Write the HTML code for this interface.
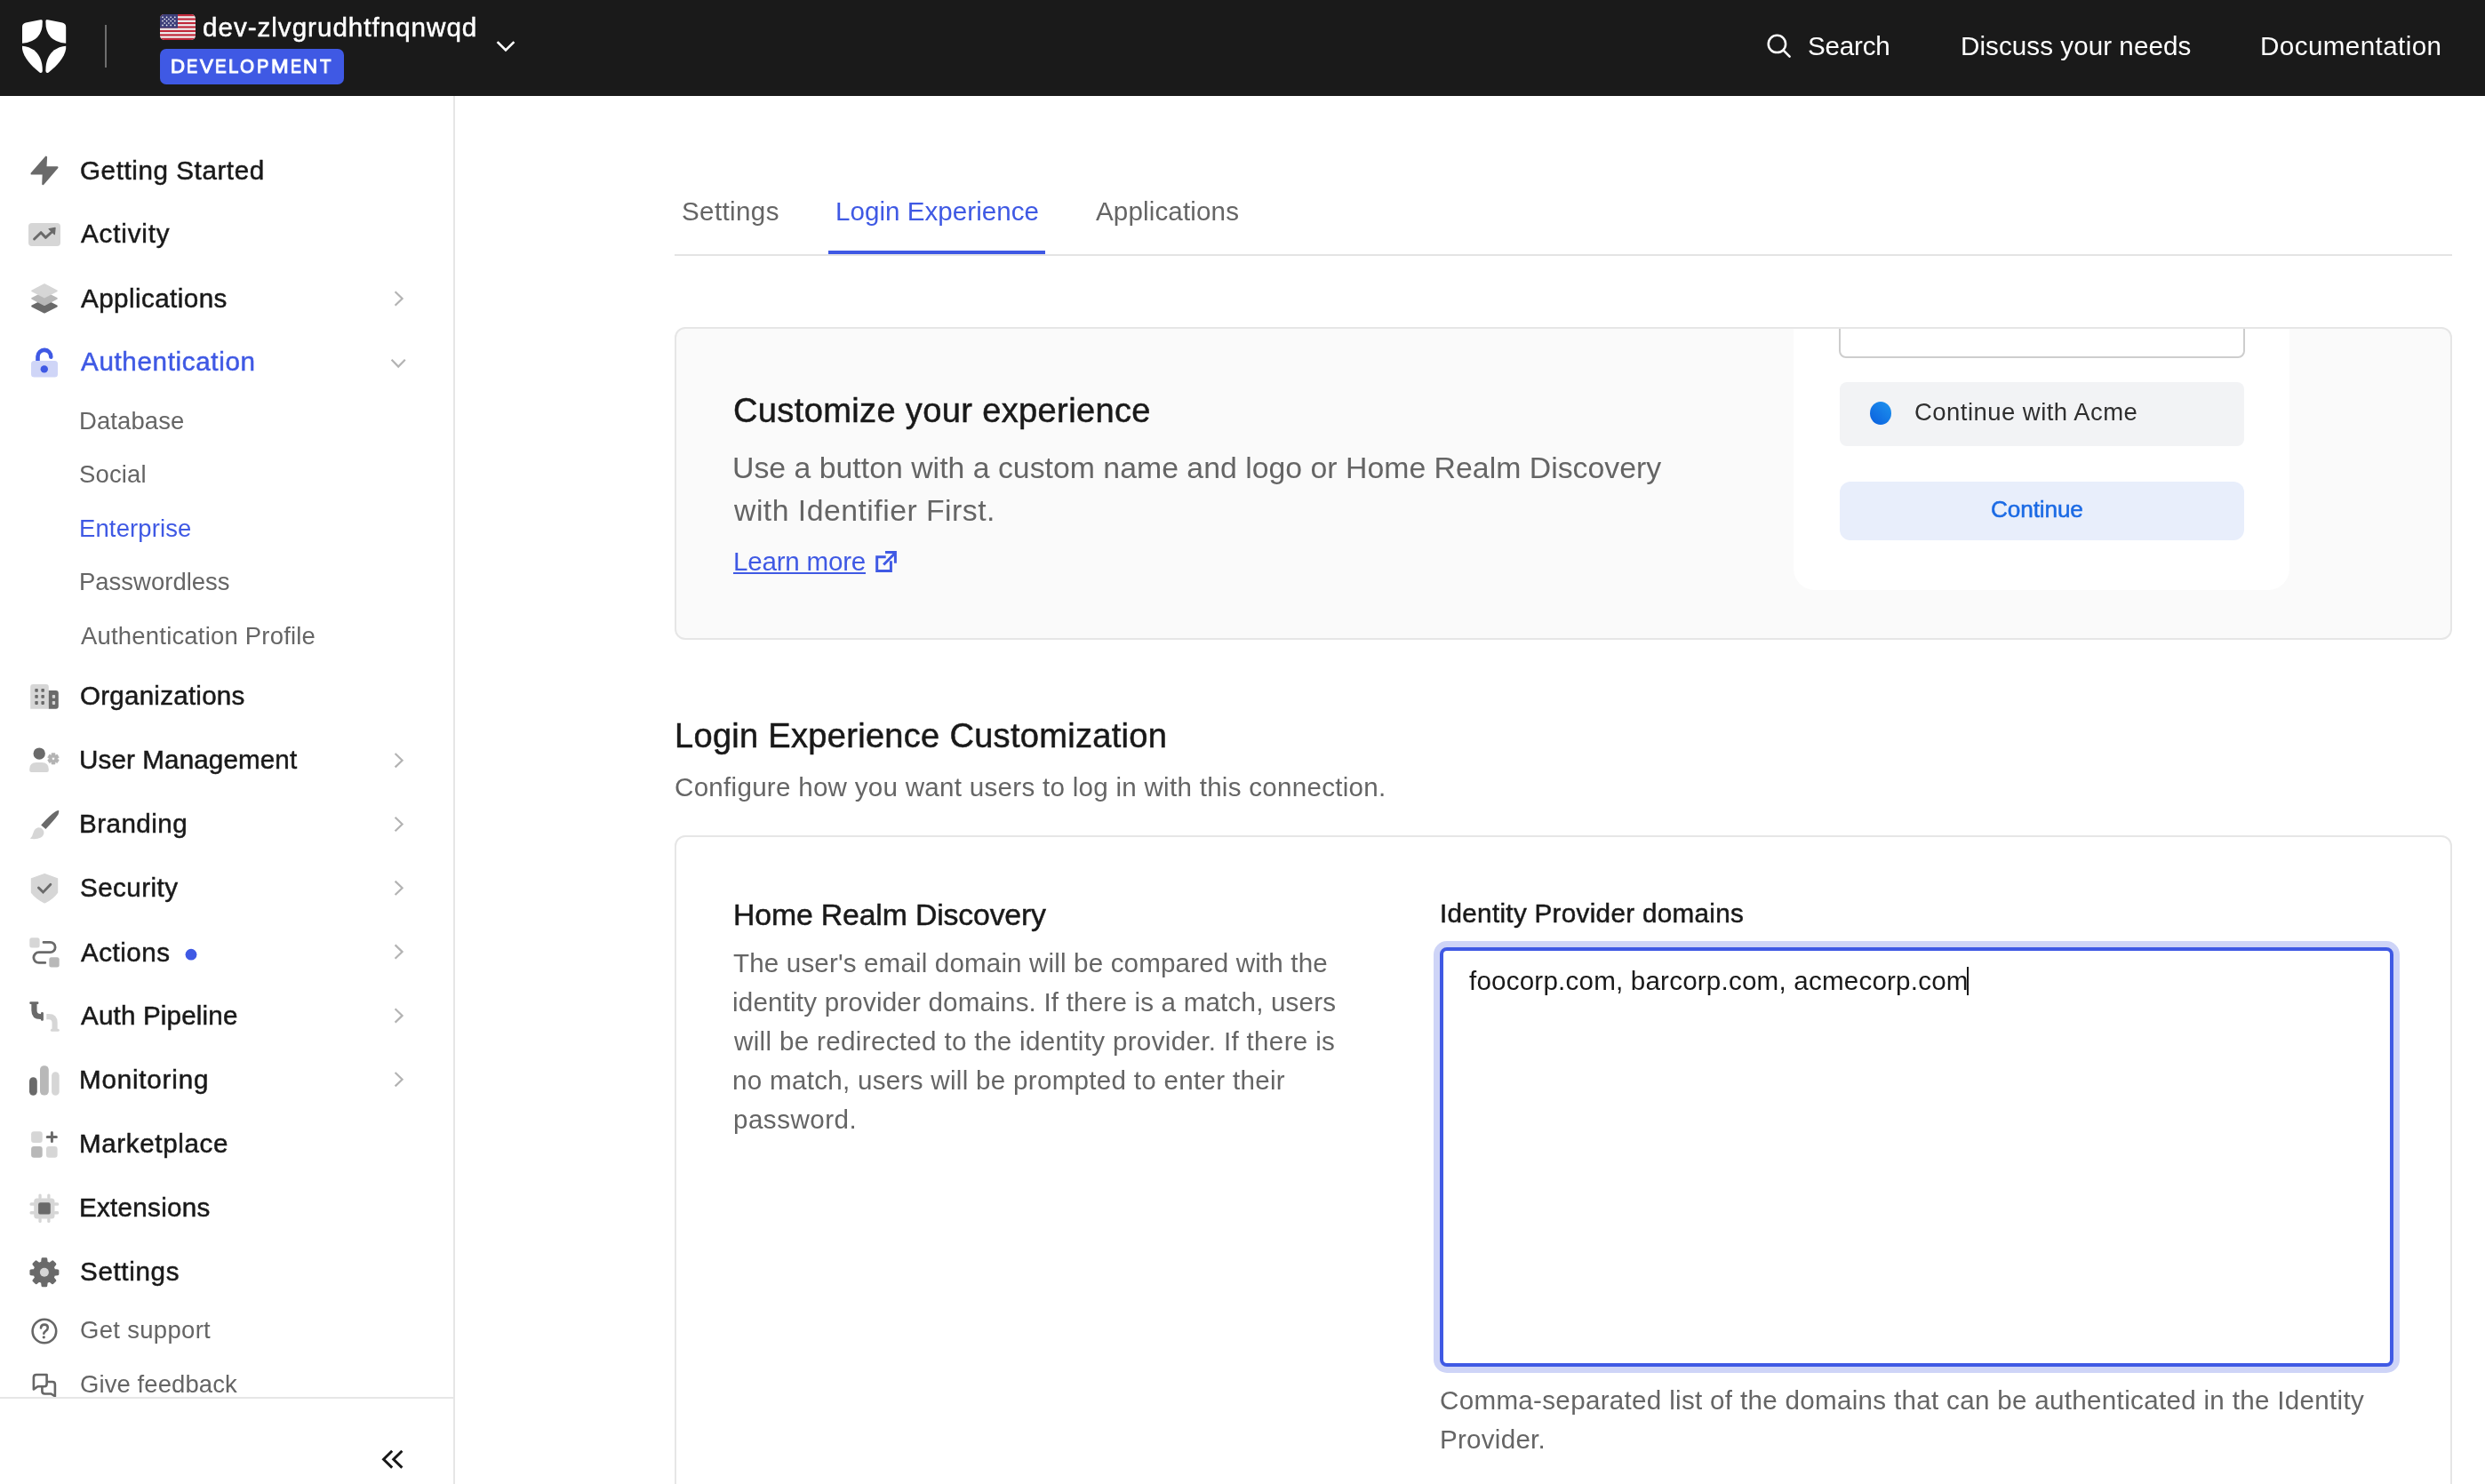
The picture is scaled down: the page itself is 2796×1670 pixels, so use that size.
<!DOCTYPE html>
<html><head><meta charset="utf-8"><title>Auth0 Dashboard</title>
<style>
html,body{margin:0;padding:0;width:2796px;height:1670px;overflow:hidden;background:#ffffff;font-family:"Liberation Sans",sans-serif}
.t{position:absolute;line-height:0;white-space:nowrap;font-family:"Liberation Sans",sans-serif;will-change:transform}
.b{position:absolute;box-sizing:border-box}
svg{position:absolute;left:0;top:0}
@media (max-width:2000px){html{zoom:0.5}}
</style></head><body>
<!-- HEADER -->
<div class="b" style="left:0;top:0;width:2796px;height:108px;background:#1a1a1a"></div>
<div class="b" style="left:118px;top:28px;width:2px;height:48px;background:#6e6e6e"></div>
<div class="b" style="left:180px;top:55px;width:207px;height:40px;background:#3f59e4;border-radius:7px"></div>

<!-- SIDEBAR -->
<div class="b" style="left:510px;top:108px;width:2px;height:1562px;background:#e6e6e6"></div>
<div class="b" style="left:0;top:1572px;width:510px;height:2px;background:#e6e6e6"></div>

<!-- TABS -->
<div class="b" style="left:759px;top:286px;width:2000px;height:2px;background:#e4e4e4"></div>
<div class="b" style="left:932px;top:282px;width:244px;height:4px;background:#3f59e4"></div>

<!-- CARD 1 -->
<div class="b" style="left:759px;top:368px;width:2000px;height:352px;border:2px solid #e6e6e6;border-radius:12px;background:#fafafa;overflow:hidden">
  <div class="b" style="left:1257px;top:-40px;width:558px;height:334px;background:#ffffff;border-radius:0 0 24px 24px"></div>
  <div class="b" style="left:1308px;top:-60px;width:457px;height:93px;background:#ffffff;border:2px solid #cdcdcd;border-radius:8px"></div>
  <div class="b" style="left:1309px;top:60px;width:455px;height:72px;background:#f2f3f5;border-radius:8px"></div>
  <div class="b" style="left:1343px;top:82px;width:24px;height:26px;border-radius:50%;background:linear-gradient(225deg,#1e94ee 0%,#0a5ede 100%)"></div>
  <div class="b" style="left:1309px;top:172px;width:455px;height:66px;background:#e8eefb;border-radius:12px"></div>
</div>

<!-- CARD 2 -->
<div class="b" style="left:759px;top:940px;width:2000px;height:900px;border:2px solid #e6e6e6;border-radius:12px;background:#ffffff"></div>
<div class="b" style="left:1620px;top:1066px;width:1073px;height:472px;border:4px solid #3f59e4;border-radius:8px;background:#ffffff;box-shadow:0 0 0 7px #ced4f7"></div>
<div class="b" style="left:2213px;top:1088px;width:2px;height:32px;background:#191919"></div>

<div class="t" style="left:228.00px;top:30.74px;font-size:29.6px;letter-spacing:0.989px;color:#ffffff;-webkit-text-stroke:0.5px #ffffff;">dev-zlvgrudhtfnqnwqd</div>
<div class="t" style="left:192.22px;top:75.00px;font-size:22.2px;letter-spacing:0.000px;color:#ffffff;-webkit-text-stroke:1px #ffffff;transform:scaleX(0.979);transform-origin:0 0;">D</div>
<div class="t" style="left:210.17px;top:75.00px;font-size:22.2px;letter-spacing:0.000px;color:#ffffff;-webkit-text-stroke:1px #ffffff;transform:scaleX(0.831);transform-origin:0 0;">E</div>
<div class="t" style="left:224.80px;top:75.00px;font-size:22.2px;letter-spacing:0.000px;color:#ffffff;-webkit-text-stroke:1px #ffffff;transform:scaleX(1.007);transform-origin:0 0;">V</div>
<div class="t" style="left:242.15px;top:75.00px;font-size:22.2px;letter-spacing:0.000px;color:#ffffff;-webkit-text-stroke:1px #ffffff;transform:scaleX(0.846);transform-origin:0 0;">E</div>
<div class="t" style="left:257.08px;top:75.00px;font-size:22.2px;letter-spacing:0.000px;color:#ffffff;-webkit-text-stroke:1px #ffffff;transform:scaleX(0.918);transform-origin:0 0;">L</div>
<div class="t" style="left:270.27px;top:75.00px;font-size:22.2px;letter-spacing:0.000px;color:#ffffff;-webkit-text-stroke:1px #ffffff;transform:scaleX(0.925);transform-origin:0 0;">O</div>
<div class="t" style="left:289.10px;top:75.00px;font-size:22.2px;letter-spacing:0.000px;color:#ffffff;-webkit-text-stroke:1px #ffffff;transform:scaleX(0.900);transform-origin:0 0;">P</div>
<div class="t" style="left:304.94px;top:75.00px;font-size:22.2px;letter-spacing:0.000px;color:#ffffff;-webkit-text-stroke:1px #ffffff;transform:scaleX(1.062);transform-origin:0 0;">M</div>
<div class="t" style="left:326.58px;top:75.00px;font-size:22.2px;letter-spacing:0.000px;color:#ffffff;-webkit-text-stroke:1px #ffffff;transform:scaleX(0.815);transform-origin:0 0;">E</div>
<div class="t" style="left:341.02px;top:75.00px;font-size:22.2px;letter-spacing:0.000px;color:#ffffff;-webkit-text-stroke:1px #ffffff;transform:scaleX(0.979);transform-origin:0 0;">N</div>
<div class="t" style="left:359.50px;top:75.00px;font-size:22.2px;letter-spacing:0.000px;color:#ffffff;-webkit-text-stroke:1px #ffffff;transform:scaleX(0.914);transform-origin:0 0;">T</div>
<div class="t" style="left:2033.90px;top:51.84px;font-size:29.6px;letter-spacing:-0.220px;color:#ffffff;">Search</div>
<div class="t" style="left:2205.60px;top:52.44px;font-size:29.6px;letter-spacing:0.059px;color:#ffffff;">Discuss your needs</div>
<div class="t" style="left:2542.80px;top:52.44px;font-size:29.6px;letter-spacing:0.417px;color:#ffffff;">Documentation</div>
<div class="t" style="left:90.20px;top:192.04px;font-size:29.6px;letter-spacing:0.579px;color:#191919;-webkit-text-stroke:0.5px #191919;">Getting Started</div>
<div class="t" style="left:91.00px;top:263.44px;font-size:29.6px;letter-spacing:0.829px;color:#191919;-webkit-text-stroke:0.5px #191919;">Activity</div>
<div class="t" style="left:91.00px;top:335.64px;font-size:29.6px;letter-spacing:0.436px;color:#191919;-webkit-text-stroke:0.5px #191919;">Applications</div>
<div class="t" style="left:91.20px;top:407.44px;font-size:29.6px;letter-spacing:0.646px;color:#3f59e4;-webkit-text-stroke:0.5px #3f59e4;">Authentication</div>
<div class="t" style="left:89.30px;top:473.67px;font-size:27.48px;letter-spacing:0.100px;color:#656565;">Database</div>
<div class="t" style="left:89.30px;top:534.27px;font-size:27.48px;letter-spacing:0.140px;color:#656565;">Social</div>
<div class="t" style="left:89.30px;top:595.27px;font-size:27.48px;letter-spacing:0.133px;color:#3f59e4;">Enterprise</div>
<div class="t" style="left:89.30px;top:655.47px;font-size:27.48px;letter-spacing:0.009px;color:#656565;">Passwordless</div>
<div class="t" style="left:91.30px;top:716.47px;font-size:27.48px;letter-spacing:0.205px;color:#656565;">Authentication Profile</div>
<div class="t" style="left:90.00px;top:783.44px;font-size:29.6px;letter-spacing:0.225px;color:#191919;-webkit-text-stroke:0.5px #191919;">Organizations</div>
<div class="t" style="left:89.00px;top:855.24px;font-size:29.6px;letter-spacing:0.121px;color:#191919;-webkit-text-stroke:0.5px #191919;">User Management</div>
<div class="t" style="left:89.00px;top:927.14px;font-size:29.6px;letter-spacing:0.457px;color:#191919;-webkit-text-stroke:0.5px #191919;">Branding</div>
<div class="t" style="left:90.00px;top:998.94px;font-size:29.6px;letter-spacing:0.443px;color:#191919;-webkit-text-stroke:0.5px #191919;">Security</div>
<div class="t" style="left:91.00px;top:1071.54px;font-size:29.6px;letter-spacing:0.500px;color:#191919;-webkit-text-stroke:0.5px #191919;">Actions</div>
<div class="t" style="left:91.00px;top:1143.44px;font-size:29.6px;letter-spacing:0.167px;color:#191919;-webkit-text-stroke:0.5px #191919;">Auth Pipeline</div>
<div class="t" style="left:89.00px;top:1215.34px;font-size:29.6px;letter-spacing:0.800px;color:#191919;-webkit-text-stroke:0.5px #191919;">Monitoring</div>
<div class="t" style="left:89.00px;top:1287.14px;font-size:29.6px;letter-spacing:0.620px;color:#191919;-webkit-text-stroke:0.5px #191919;">Marketplace</div>
<div class="t" style="left:89.00px;top:1359.24px;font-size:29.6px;letter-spacing:0.289px;color:#191919;-webkit-text-stroke:0.5px #191919;">Extensions</div>
<div class="t" style="left:90.00px;top:1431.24px;font-size:29.6px;letter-spacing:0.643px;color:#191919;-webkit-text-stroke:0.5px #191919;">Settings</div>
<div class="t" style="left:90.30px;top:1496.97px;font-size:27.48px;letter-spacing:0.320px;color:#656565;">Get support</div>
<div class="t" style="left:90.30px;top:1557.87px;font-size:27.48px;letter-spacing:0.100px;color:#656565;">Give feedback</div>
<div class="t" style="left:766.50px;top:237.84px;font-size:29.6px;letter-spacing:0.357px;color:#656565;">Settings</div>
<div class="t" style="left:939.50px;top:237.84px;font-size:29.6px;letter-spacing:0.020px;color:#3f59e4;">Login Experience</div>
<div class="t" style="left:1232.80px;top:237.84px;font-size:29.6px;letter-spacing:0.127px;color:#656565;">Applications</div>
<div class="t" style="left:824.90px;top:461.91px;font-size:38.05px;letter-spacing:0.354px;color:#191919;-webkit-text-stroke:0.5px #191919;">Customize your experience</div>
<div class="t" style="left:824.40px;top:525.97px;font-size:33.82px;letter-spacing:0.005px;color:#656565;">Use a button with a custom name and logo or Home Realm Discovery</div>
<div class="t" style="left:826.30px;top:573.77px;font-size:33.82px;letter-spacing:0.462px;color:#656565;">with Identifier First.</div>
<div class="t" style="left:825.30px;top:631.54px;font-size:29.6px;letter-spacing:-0.233px;color:#3f59e4;text-decoration:underline;text-decoration-thickness:2px;text-underline-offset:2px;">Learn more</div>
<div class="t" style="left:2154.40px;top:464.47px;font-size:27.48px;letter-spacing:0.476px;color:#2f2f2f;">Continue with Acme</div>
<div class="t" style="left:2240.30px;top:573.31px;font-size:26.21px;letter-spacing:-0.143px;color:#1b6ae4;-webkit-text-stroke:0.5px #1b6ae4;">Continue</div>
<div class="t" style="left:759.00px;top:827.51px;font-size:38.05px;letter-spacing:0.283px;color:#191919;-webkit-text-stroke:0.5px #191919;">Login Experience Customization</div>
<div class="t" style="left:758.60px;top:885.84px;font-size:29.6px;letter-spacing:0.264px;color:#656565;">Configure how you want users to log in with this connection.</div>
<div class="t" style="left:824.70px;top:1028.57px;font-size:33.82px;letter-spacing:-0.163px;color:#191919;-webkit-text-stroke:0.5px #191919;">Home Realm Discovery</div>
<div class="t" style="left:824.70px;top:1084.14px;font-size:29.6px;letter-spacing:0.142px;color:#656565;">The user's email domain will be compared with the</div>
<div class="t" style="left:823.70px;top:1128.14px;font-size:29.6px;letter-spacing:0.185px;color:#656565;">identity provider domains. If there is a match, users</div>
<div class="t" style="left:825.70px;top:1172.04px;font-size:29.6px;letter-spacing:0.325px;color:#656565;">will be redirected to the identity provider. If there is</div>
<div class="t" style="left:823.70px;top:1216.04px;font-size:29.6px;letter-spacing:0.283px;color:#656565;">no match, users will be prompted to enter their</div>
<div class="t" style="left:824.50px;top:1259.94px;font-size:29.6px;letter-spacing:0.475px;color:#656565;">password.</div>
<div class="t" style="left:1620.20px;top:1028.04px;font-size:29.6px;letter-spacing:0.325px;color:#191919;-webkit-text-stroke:0.5px #191919;">Identity Provider domains</div>
<div class="t" style="left:1653.00px;top:1104.24px;font-size:29.6px;letter-spacing:0.195px;color:#191919;">foocorp.com, barcorp.com, acmecorp.com</div>
<div class="t" style="left:1619.70px;top:1576.24px;font-size:29.6px;letter-spacing:0.304px;color:#656565;">Comma-separated list of the domains that can be authenticated in the Identity</div>
<div class="t" style="left:1619.70px;top:1620.24px;font-size:29.6px;letter-spacing:0.250px;color:#656565;">Provider.</div>

<svg width="2796" height="1670" viewBox="0 0 2796 1670">
 <defs>
  <clipPath id="flagclip"><rect x="180" y="16" width="40" height="29" rx="4.8"/></clipPath>
  <clipPath id="fbclip"><rect x="0" y="1500" width="510" height="72"/></clipPath>
 </defs>
 <!-- logo -->
 <g transform="translate(25,22)" fill="#ffffff">
  <path d="M0,8.5 C0,5.6 1.4,4.3 4,3.6 L20.5,0.3 C22.2,0 22.8,0.6 22.8,2.2 Q23.2,24.6 0,26.8 Z"/>
  <path d="M0,29.8 C9,30.5 22.8,36 22.8,57.5 C22.8,60 21,60.6 19.5,59.5 C9,51 2,43 0,33 Z"/>
  <g transform="translate(49.2,0) scale(-1,1)">
   <path d="M0,8.5 C0,5.6 1.4,4.3 4,3.6 L20.5,0.3 C22.2,0 22.8,0.6 22.8,2.2 Q23.2,24.6 0,26.8 Z"/>
   <path d="M0,29.8 C9,30.5 22.8,36 22.8,57.5 C22.8,60 21,60.6 19.5,59.5 C9,51 2,43 0,33 Z"/>
  </g>
 </g>
 <!-- flag -->
 <g clip-path="url(#flagclip)">
  <rect x="180" y="16" width="40" height="29" fill="#eef0f0"/>
  <rect x="180" y="16" width="40" height="2.23" fill="#c0283a"/>
  <rect x="180" y="20.46" width="40" height="2.23" fill="#c0283a"/>
  <rect x="180" y="24.92" width="40" height="2.23" fill="#c0283a"/>
  <rect x="180" y="29.38" width="40" height="2.23" fill="#c0283a"/>
  <rect x="180" y="33.85" width="40" height="2.23" fill="#c0283a"/>
  <rect x="180" y="38.31" width="40" height="2.23" fill="#c0283a"/>
  <rect x="180" y="42.77" width="40" height="2.23" fill="#c0283a"/>
  <rect x="180" y="16" width="20" height="15.6" fill="#3d3f7a"/>
  <g fill="#f4f4f8"><circle cx="183" cy="19.3" r="0.85"/><circle cx="187.6" cy="19.3" r="0.85"/><circle cx="192.2" cy="19.3" r="0.85"/><circle cx="196.8" cy="19.3" r="0.85"/><circle cx="185.3" cy="21.5" r="0.85"/><circle cx="189.9" cy="21.5" r="0.85"/><circle cx="194.5" cy="21.5" r="0.85"/><circle cx="183" cy="23.6" r="0.85"/><circle cx="187.6" cy="23.6" r="0.85"/><circle cx="192.2" cy="23.6" r="0.85"/><circle cx="196.8" cy="23.6" r="0.85"/><circle cx="185.3" cy="26.0" r="0.85"/><circle cx="189.9" cy="26.0" r="0.85"/><circle cx="194.5" cy="26.0" r="0.85"/><circle cx="183" cy="28.4" r="0.85"/><circle cx="187.6" cy="28.4" r="0.85"/><circle cx="192.2" cy="28.4" r="0.85"/><circle cx="196.8" cy="28.4" r="0.85"/></g>
 </g>
 <!-- tenant chevron -->
 <polyline points="560.5,48 569,56.5 577.5,48" fill="none" stroke="#ffffff" stroke-width="2.6" stroke-linecap="square"/>
 <!-- search icon -->
 <circle cx="1999.4" cy="49.4" r="9.7" fill="none" stroke="#ffffff" stroke-width="2.5"/>
 <line x1="2006.6" y1="56.6" x2="2013.6" y2="63.6" stroke="#ffffff" stroke-width="2.6" stroke-linecap="round"/>

 <!-- sidebar icons -->
 <!-- getting started -->
 <path d="M51.9,176.8 L51.3,188.3 L64.3,188.5 L48.4,207.0 L48.9,195.4 L35.7,195.4 Z" fill="#6a6a6a" stroke="#6a6a6a" stroke-width="2.4" stroke-linejoin="round"/>
 <!-- activity -->
 <rect x="32" y="251" width="36" height="26" rx="4" fill="#d6d6d6"/>
 <polyline points="38.6,269 46.1,261.7 51.3,267.3 58.3,261" fill="none" stroke="#6a6a6a" stroke-width="3" stroke-linecap="round" stroke-linejoin="round"/>
 <path d="M55.2,257.6 L62,256.4 L61.3,263.6 Z" fill="#6a6a6a" stroke="#6a6a6a" stroke-width="1.4" stroke-linejoin="round"/>
 <!-- applications -->
 <polygon points="36.2,344.5 50,351.6 63.8,344.5 50,337.4" fill="#6a6a6a" stroke="#6a6a6a" stroke-width="2" stroke-linejoin="round"/>
 <polygon points="36.2,335.9 50,343 63.8,335.9 50,328.8" fill="#b8b8b8" stroke="#b8b8b8" stroke-width="2" stroke-linejoin="round"/>
 <polygon points="36.2,327.3 50,334.4 63.8,327.3 50,320.2" fill="#d6d6d6" stroke="#d6d6d6" stroke-width="2" stroke-linejoin="round"/>
 <!-- authentication -->
 <path d="M42.5,407 V401 A7.4,7.4 0 0 1 57.3,401.6" fill="none" stroke="#3f59e4" stroke-width="4.6" stroke-linecap="round"/>
 <rect x="35" y="406" width="30" height="18.5" rx="3.5" fill="#cfd5f7"/>
 <circle cx="49.8" cy="415.4" r="4.2" fill="#3f59e4"/>
 <!-- organizations -->
 <path d="M34.2,797.8 V773 Q34.2,770 37.2,770 H51.8 Q54.8,770 54.8,773 V797.8 Z" fill="#d6d6d6"/>
 <path d="M54.8,777 H62.8 Q65.8,777 65.8,780 V794.8 Q65.8,797.8 62.8,797.8 H54.8 Z" fill="#6a6a6a"/>
 <g fill="#6a6a6a">
  <rect x="39.3" y="774.9" width="3.5" height="3.9" rx="0.8"/><rect x="46.4" y="774.9" width="3.5" height="3.9" rx="0.8"/>
  <rect x="39.3" y="781.9" width="3.5" height="3.9" rx="0.8"/><rect x="46.4" y="781.9" width="3.5" height="3.9" rx="0.8"/>
  <rect x="39.3" y="789" width="3.5" height="3.9" rx="0.8"/><rect x="46.4" y="789" width="3.5" height="3.9" rx="0.8"/>
 </g>
 <rect x="58.8" y="781.9" width="3.3" height="3.9" rx="0.8" fill="#d6d6d6"/><rect x="58.8" y="789" width="3.3" height="3.9" rx="0.8" fill="#d6d6d6"/>
 <!-- user management -->
 <circle cx="44.2" cy="848.1" r="6.7" fill="#6a6a6a"/>
 <path d="M35.2,869 Q33.2,869 33.2,867 V865.5 Q33.2,858 41,858 H47 Q54.8,858 54.8,865.5 V867 Q54.8,869 52.8,869 Z" fill="#d6d6d6"/>
 <path fill-rule="evenodd" fill="#b3b3b3" stroke="#b3b3b3" stroke-width="0.8" stroke-linejoin="round" d="M58.12,849.60 L58.11,847.69 L61.89,847.69 L61.88,849.60 L62.70,850.08 L64.35,849.10 L66.24,852.38 L64.58,853.32 L64.58,854.28 L66.24,855.22 L64.35,858.50 L62.70,857.52 L61.88,858.00 L61.89,859.91 L58.11,859.91 L58.12,858.00 L57.30,857.52 L55.65,858.50 L53.76,855.22 L55.42,854.28 L55.42,853.32 L53.76,852.38 L55.65,849.10 L57.30,850.08 Z M61.70,853.80 A1.7,1.7 0 1 0 58.30,853.80 A1.7,1.7 0 1 0 61.70,853.80 Z"/>
 <!-- branding -->
 <path d="M66.2,912.1 Q66.6,914.5 65.5,916.5 Q62,922 51.4,932.9 L46.2,928.4 Q56,917.5 62,913.5 Q64.5,911.6 66.2,912.1 Z" fill="#6a6a6a"/>
 <path d="M33.9,943.8 Q36.5,941.5 37.5,937 Q39,932 43,931.2 Q47.5,931 49.3,935.5 Q50,940 46,942.5 Q41,945 33.9,943.8 Z" fill="#d6d6d6"/>
 <!-- security -->
 <path d="M50.2,983.6 L64.6,988.8 V1004.3 Q60,1011 50.2,1016 Q40.4,1011 35.4,1004.3 V988.8 Z" fill="#d6d6d6" stroke="#d6d6d6" stroke-width="1.2" stroke-linejoin="round"/>
 <polyline points="43.4,999 48.5,1004.1 56.9,995.2" fill="none" stroke="#6a6a6a" stroke-width="2.8" stroke-linecap="round"/>
 <!-- actions -->
 <rect x="33.3" y="1055.2" width="11.3" height="11.4" rx="2.5" fill="#d6d6d6"/>
 <rect x="55.3" y="1077.2" width="11.4" height="11.4" rx="2.5" fill="#b8b8b8"/>
 <path d="M49,1060.4 H56.5 A5.65,5.65 0 0 1 56.5,1071.7 H43.7 A5.85,5.85 0 0 0 43.7,1083.4 H50.8" fill="none" stroke="#6a6a6a" stroke-width="2.8" stroke-linecap="round"/>
 <!-- auth pipeline -->
 <path d="M38.45,1129.5 V1137 Q38.45,1144 45.5,1144 H47" fill="none" stroke="#6a6a6a" stroke-width="6.2"/>
 <rect x="33.3" y="1127.2" width="10.1" height="2.9" rx="1" fill="#6a6a6a"/>
 <rect x="46" y="1139" width="2.9" height="9.7" rx="1.2" fill="#6a6a6a"/>
 <path d="M52.3,1144.1 H55 Q61.6,1144.1 61.6,1151 V1158.5" fill="none" stroke="#d6d6d6" stroke-width="6.1"/>
 <rect x="56.9" y="1157.7" width="9.9" height="3" rx="1.5" fill="#d6d6d6"/>
 <!-- monitoring -->
 <rect x="33" y="1212.3" width="8.8" height="20.4" rx="4.4" fill="#6a6a6a"/>
 <rect x="45" y="1199.2" width="9.8" height="33.4" rx="4.5" fill="#b8b8b8"/>
 <rect x="58.1" y="1206.2" width="8.6" height="26.5" rx="4.3" fill="#d6d6d6"/>
 <!-- marketplace -->
 <rect x="35.1" y="1273.2" width="12.6" height="12.7" rx="3" fill="#d6d6d6"/>
 <rect x="35.1" y="1289.9" width="12.6" height="12.8" rx="3" fill="#b8b8b8"/>
 <rect x="52" y="1289.9" width="12.6" height="12.8" rx="3" fill="#d6d6d6"/>
 <path d="M58.4,1274.5 V1284.6 M53.2,1279.5 H63.4" stroke="#6a6a6a" stroke-width="3" stroke-linecap="round" fill="none"/>
 <!-- extensions -->
 <g fill="#d6d6d6">
  <rect x="43.4" y="1343.4" width="3.3" height="6" rx="1.5"/><rect x="53.2" y="1343.4" width="3.3" height="6" rx="1.5"/>
  <rect x="43.4" y="1370.5" width="3.3" height="5.6" rx="1.5"/><rect x="53.2" y="1370.5" width="3.3" height="5.6" rx="1.5"/>
  <rect x="33.5" y="1353.3" width="6" height="3.4" rx="1.5"/><rect x="33.5" y="1363.1" width="6" height="3.4" rx="1.5"/>
  <rect x="60.5" y="1353.3" width="5.7" height="3.4" rx="1.5"/><rect x="60.5" y="1363.1" width="5.7" height="3.4" rx="1.5"/>
  <rect x="38.2" y="1348.4" width="23.3" height="23" rx="3.5"/>
 </g>
 <rect x="43.1" y="1353.2" width="13.7" height="13.4" rx="2.2" fill="#6a6a6a"/>
 <!-- settings -->
 <path fill="#6a6a6a" stroke="#6a6a6a" stroke-width="2.8" stroke-linejoin="round" d="M47.46,1420.87 L47.93,1416.73 L51.87,1416.73 L52.34,1420.87 L55.90,1422.34 L59.16,1419.75 L61.95,1422.54 L59.36,1425.80 L60.83,1429.36 L64.97,1429.83 L64.97,1433.77 L60.83,1434.24 L59.36,1437.80 L61.95,1441.06 L59.16,1443.85 L55.90,1441.26 L52.34,1442.73 L51.87,1446.87 L47.93,1446.87 L47.46,1442.73 L43.90,1441.26 L40.64,1443.85 L37.85,1441.06 L40.44,1437.80 L38.97,1434.24 L34.83,1433.77 L34.83,1429.83 L38.97,1429.36 L40.44,1425.80 L37.85,1422.54 L40.64,1419.75 L43.90,1422.34 Z"/>
 <circle cx="49.9" cy="1431.8" r="5" fill="#d6d6d6"/>
 <!-- get support -->
 <circle cx="49.9" cy="1498" r="13.3" fill="none" stroke="#666666" stroke-width="2.6"/>
 <path d="M46,1494.4 Q46.2,1490.6 50,1490.6 Q53.8,1490.6 53.8,1494 Q53.8,1496 51.5,1497.8 Q49.3,1499.5 49.3,1500.8" fill="none" stroke="#666666" stroke-width="2.6" stroke-linecap="round"/>
 <circle cx="49.3" cy="1504.8" r="1.6" fill="#666666"/>
 <!-- give feedback -->
 <g clip-path="url(#fbclip)" fill="none" stroke="#666666" stroke-width="2.6" stroke-linejoin="round">
  <path d="M37.9,1563.5 V1550 Q37.9,1547 40.9,1547 H52.6 V1557.5 Q52.6,1560.2 49.9,1560.2 H42.5 Z"/>
  <path d="M52.6,1555 H59 Q61.9,1555 61.9,1558 V1571.3 L57.5,1568.5 H50.4 Q47.4,1568.5 47.4,1565.5 V1560.2"/>
 </g>
 <!-- chevrons -->
 <g fill="none" stroke="#b3b3b3" stroke-width="2.2">
  <polyline points="444.6,328.3 452.6,336 444.6,343.7"/>
  <polyline points="444.6,848 452.6,855.7 444.6,863.4"/>
  <polyline points="444.6,919.8 452.6,927.5 444.6,935.2"/>
  <polyline points="444.6,991.6 452.6,999.3 444.6,1007"/>
  <polyline points="444.6,1063.4 452.6,1071.1 444.6,1078.8"/>
  <polyline points="444.6,1135.2 452.6,1142.9 444.6,1150.6"/>
  <polyline points="444.6,1207 452.6,1214.7 444.6,1222.4"/>
  <polyline points="440.6,404.8 448.2,412.6 455.8,404.8"/>
 </g>
 <circle cx="215" cy="1074.2" r="6.4" fill="#3f59e4"/>
 <!-- collapse -->
 <g fill="none" stroke="#191919" stroke-width="3">
  <polyline points="441.2,1632.8 431.6,1642.2 441.2,1651.6"/>
  <polyline points="452.4,1632.8 442.8,1642.2 452.4,1651.6"/>
 </g>
 <!-- learn more icon -->
 <path d="M996.7,626.7 H986.7 V642.5 H1002.4 V631.3 M994.2,635.5 L1006.5,623 M996,621.6 H1007.4 V633.8" fill="none" stroke="#3f59e4" stroke-width="3"/>
</svg>
</body></html>
